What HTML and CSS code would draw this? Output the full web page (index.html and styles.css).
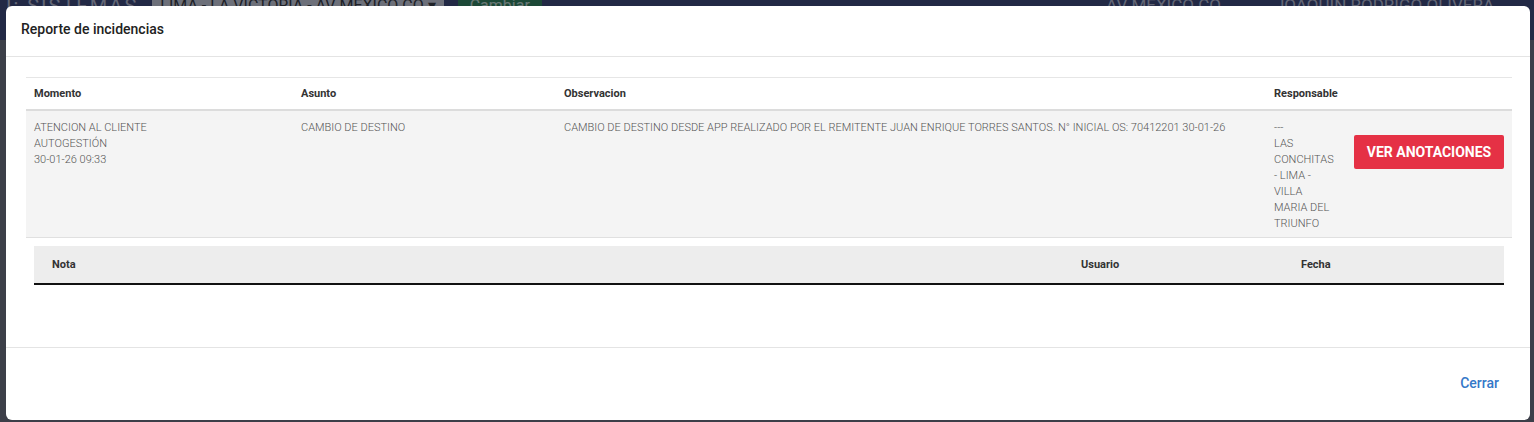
FILE: index.html
```html
<!DOCTYPE html>
<html lang="es">
<head>
<meta charset="utf-8">
<title>Reporte de incidencias</title>
<link rel="stylesheet" href="styles.css">
</head>
<body>
<div class="app">
  <header class="topbar">
    <span class="brand">I: SISTEMAS</span>
    <span class="branch">LIMA - LA VICTORIA - AV MEXICO CO <span class="caret">▾</span></span>
    <span class="change">Cambiar</span>
    <span class="spacer"></span>
    <span class="who">AV MEXICO CO</span>
    <span class="who">JOAQUIN RODRIGO OLIVERA</span>
  </header>
  <main class="page"></main>
</div>
<div class="backdrop"></div>
<div class="modal">
  <div class="modal-header">Reporte de incidencias</div>
  <div class="modal-body">
    <table class="grid">
      <colgroup>
        <col class="c-mom"><col class="c-asu"><col class="c-obs"><col class="c-res"><col class="c-act">
      </colgroup>
      <thead>
        <tr>
          <th>Momento</th>
          <th>Asunto</th>
          <th>Observacion</th>
          <th>Responsable</th>
          <th></th>
        </tr>
      </thead>
      <tbody>
        <tr class="row">
          <td>ATENCION AL CLIENTE<br>AUTOGESTIÓN<br>30-01-26 09:33</td>
          <td>CAMBIO DE DESTINO</td>
          <td>CAMBIO DE DESTINO DESDE APP REALIZADO POR EL REMITENTE JUAN ENRIQUE TORRES SANTOS. N° INICIAL OS: 70412201 30-01-26</td>
          <td>---<br>LAS CONCHITAS - LIMA - VILLA MARIA DEL TRIUNFO</td>
          <td><button class="btn-red">VER ANOTACIONES</button></td>
        </tr>
        <tr class="sub">
          <td colspan="5">
            <table class="notes">
              <thead>
                <tr>
                  <th class="n-nota">Nota</th>
                  <th class="n-user">Usuario</th>
                  <th class="n-date">Fecha</th>
                </tr>
              </thead>
            </table>
          </td>
        </tr>
      </tbody>
    </table>
  </div>
  <div class="modal-footer">
    <button class="btn-link">Cerrar</button>
  </div>
</div>
</body>
</html>
```
FILE: styles.css
```css
* { box-sizing: border-box; }
html, body { margin: 0; padding: 0; }
body {
  width: 1534px;
  height: 422px;
  overflow: hidden;
  font-family: Roboto, "Liberation Sans", sans-serif;
  background: #5e6270;
  position: relative;
}
.app { height: 100%; display: flex; flex-direction: column; }
.topbar {
  height: 40px;
  background: #3b4575;
  display: flex;
  align-items: flex-start;
  gap: 14px;
  padding: 0 0 0 6px;
  color: #c9cde0;
  font-size: 20px;
  white-space: nowrap;
  overflow: hidden;
}
.topbar .brand { letter-spacing: 2px; margin-top: -6px; }
.topbar .branch { background: #dfe2ea; color: #333; font-size: 16px; padding: 0 8px; margin-top: -4px; }
.topbar .change { background: #2e8b57; color: #d9f3e3; font-size: 16px; padding: 0 12px; margin-top: -4px; }
.topbar .spacer { flex: 1; }
.topbar .who { font-size: 17px; margin-top: -5px; margin-right: 40px; }
.page { flex: 1; background: #73777f; }
.backdrop {
  position: absolute;
  inset: 0;
  background: rgba(15, 18, 30, 0.55);
}
.modal {
  position: absolute;
  left: 6px;
  top: 6px;
  width: 1524px;
  height: 414px;
  background: #fff;
  border-radius: 6px;
  display: flex;
  flex-direction: column;
  overflow: hidden;
}
.modal-header {
  height: 51px;
  border-bottom: 1px solid #e4e4e4;
  padding: 15px 0 0 15px;
  font-size: 14px;
  font-weight: 500;
  color: #222;
}
.modal-body {
  height: 291px;
  border-bottom: 1px solid #e4e4e4;
  padding: 20px 16px 0 20px;
}
.grid {
  width: 1486px;
  border-collapse: collapse;
  table-layout: fixed;
  font-size: 11px;
}
.c-mom { width: 267px; }
.c-asu { width: 263px; }
.c-obs { width: 710px; }
.c-res { width: 80px; }
.c-act { width: 166px; }
.grid > thead th {
  text-align: left;
  font-weight: 700;
  color: #333;
  height: 32px;
  padding: 0 8px;
  border-top: 1px solid #e6e6e6;
  border-bottom: 2px solid #dcdcdc;
  vertical-align: middle;
}
.row td {
  background: #f4f4f4;
  vertical-align: top;
  padding: 9px 8px 5px;
  line-height: 16px;
  color: #555;
  font-weight: 300;
  border-bottom: 1px solid #e0e0e0;
}
.btn-red {
  margin-top: 15px;
  width: 150px;
  height: 34px;
  border: 0;
  border-radius: 2px;
  background: #e53145;
  color: #fff;
  font-family: inherit;
  font-size: 14px;
  font-weight: 700;
  padding: 0;
}
.sub td { padding: 8px 8px 0; }
.notes {
  width: 100%;
  border-collapse: collapse;
  table-layout: fixed;
}
.notes th {
  height: 38px;
  background: #ededed;
  border-bottom: 2px solid #111;
  text-align: left;
  font-size: 11px;
  font-weight: 700;
  color: #333;
  padding: 0 18px;
  vertical-align: middle;
}
.n-nota { width: 1029px; }
.n-user { width: 220px; }
.modal-footer {
  flex: 1;
  display: flex;
  justify-content: flex-end;
  align-items: center;
  padding: 0 31px 2px 0;
}
.btn-link {
  border: 0;
  background: none;
  padding: 0;
  font-family: inherit;
  font-size: 14px;
  font-weight: 500;
  color: #3478c8;
}
```
